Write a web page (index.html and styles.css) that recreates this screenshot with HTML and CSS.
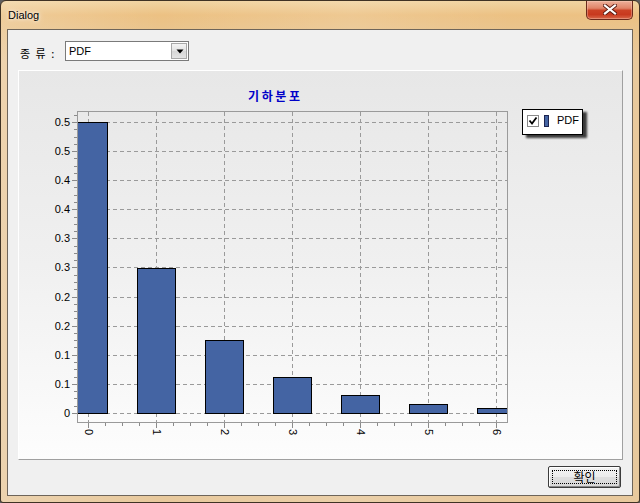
FILE: index.html
```html
<!DOCTYPE html>
<html>
<head>
<meta charset="utf-8">
<title>Dialog</title>
<link rel="stylesheet" href="styles.css">
</head>
<body>
<div class="window">
  <div class="titlebar">
    <span class="title">Dialog</span>
    <div class="close">
      <svg width="14" height="11" viewBox="0 0 14 11">
        <path d="M2 1.5L12 9.5M12 1.5L2 9.5" stroke="#5a1a10" stroke-width="4" stroke-linecap="square"/>
        <path d="M2 1.5L12 9.5M12 1.5L2 9.5" stroke="#ffffff" stroke-width="2.2" stroke-linecap="square"/>
      </svg>
    </div>
  </div>
  <div class="client">
    <div class="toprow">
      <span class="label">종 류 :</span>
      <div class="combo">
        <span class="combo-text">PDF</span>
        <span class="combo-btn">
          <svg width="8" height="5" viewBox="0 0 8 5"><path d="M0.5 0.5H7.5L4 4.5Z" fill="#000"/></svg>
        </span>
      </div>
    </div>
    <div class="panel">
      <svg class="chart" width="603" height="388" viewBox="19 71 603 388">
        <defs>
          <clipPath id="plotclip"><rect x="78" y="112" width="429" height="311"/></clipPath>
          <filter id="shadow" x="-20%" y="-30%" width="150%" height="180%">
            <feDropShadow dx="4" dy="3" stdDeviation="1.3" flood-color="#000" flood-opacity="0.75"/>
          </filter>
        </defs>

        <text class="ctitle" x="248" y="101">기하분포</text>

        <!-- grid -->
        <path class="grid" d="M78 122.5H507M78 151.5H507M78 180.5H507M78 209.5H507M78 238.5H507M78 267.5H507M78 297.5H507M78 326.5H507M78 355.5H507M78 384.5H507M78 413.5H507
                              M88.5 112V422M156.5 112V422M224.5 112V422M292.5 112V422M360.5 112V422M428.5 112V422M496.5 112V422"/>

        <!-- bars -->
        <g class="bars" clip-path="url(#plotclip)">
          <rect x="69.5" y="122.5" width="38" height="291"/>
          <rect x="137.5" y="268.5" width="38" height="145"/>
          <rect x="205.5" y="340.5" width="38" height="73"/>
          <rect x="273.5" y="377.5" width="38" height="36"/>
          <rect x="341.5" y="395.5" width="38" height="18"/>
          <rect x="409.5" y="404.5" width="38" height="9"/>
          <rect x="477.5" y="408.5" width="38" height="5"/>
        </g>

        <!-- plot frame -->
        <rect class="frame" x="77.5" y="111.5" width="430" height="311"/>

        <!-- y ticks -->
        <path class="tick" d="M72 413.5H77M72 384.5H77M72 355.5H77M72 326.5H77M72 297.5H77M72 267.5H77M72 238.5H77M72 209.5H77M72 180.5H77M72 151.5H77M72 122.5H77
          M74 406.5H77M74 398.5H77M74 391.5H77M74 377.5H77M74 369.5H77M74 362.5H77M74 347.5H77M74 340.5H77M74 333.5H77M74 318.5H77M74 311.5H77M74 304.5H77
          M74 289.5H77M74 282.5H77M74 275.5H77M74 260.5H77M74 253.5H77M74 246.5H77M74 231.5H77M74 224.5H77M74 217.5H77M74 202.5H77M74 195.5H77M74 187.5H77
          M74 173.5H77M74 166.5H77M74 158.5H77M74 144.5H77M74 137.5H77M74 129.5H77M74 115.5H77"/>

        <!-- x ticks -->
        <path class="tick" d="M88.5 423V428M156.5 423V428M224.5 423V428M292.5 423V428M360.5 423V428M428.5 423V428M496.5 423V428
          M105.5 423V426M122.5 423V426M139.5 423V426M173.5 423V426M190.5 423V426M207.5 423V426M241.5 423V426M258.5 423V426M275.5 423V426
          M309.5 423V426M326.5 423V426M343.5 423V426M377.5 423V426M394.5 423V426M411.5 423V426M445.5 423V426M462.5 423V426M479.5 423V426"/>

        <!-- y labels -->
        <g class="ylab">
          <text x="70" y="126">0.5</text>
          <text x="70" y="155">0.5</text>
          <text x="70" y="184">0.4</text>
          <text x="70" y="213">0.4</text>
          <text x="70" y="242">0.3</text>
          <text x="70" y="271">0.3</text>
          <text x="70" y="301">0.2</text>
          <text x="70" y="330">0.2</text>
          <text x="70" y="359">0.1</text>
          <text x="70" y="388">0.1</text>
          <text x="70" y="417">0</text>
        </g>

        <!-- x labels -->
        <g class="xlab">
          <text transform="translate(85 429) rotate(90)">0</text>
          <text transform="translate(153 429) rotate(90)">1</text>
          <text transform="translate(221 429) rotate(90)">2</text>
          <text transform="translate(289 429) rotate(90)">3</text>
          <text transform="translate(357 429) rotate(90)">4</text>
          <text transform="translate(425 429) rotate(90)">5</text>
          <text transform="translate(493 429) rotate(90)">6</text>
        </g>

        <!-- legend -->
        <g class="legend">
          <rect class="legend-box" x="522.5" y="109.5" width="60" height="25" filter="url(#shadow)"/>
          <rect class="chk" x="527.5" y="115.5" width="11" height="11"/>
          <path class="chkmark" d="M529.5 120.5L532 123.5L536.5 117.5"/>
          <rect class="swatch" x="544.5" y="115.5" width="4" height="11"/>
          <text class="legend-text" x="557" y="124">PDF</text>
        </g>
      </svg>
    </div>
    <div class="buttons">
      <button class="ok">확인</button>
    </div>
  </div>
</div>
</body>
</html>
```

FILE: styles.css
```css
* {
  box-sizing: border-box;
}

html,
body {
  margin: 0;
  padding: 0;
}

body {
  width: 640px;
  height: 503px;
  overflow: hidden;
  background: #5e5e5e;
  font-family: "Liberation Sans", Arial, sans-serif;
}

.window {
  width: 640px;
  height: 503px;
  border: 1px solid #3f3224;
  border-radius: 6px 6px 3px 3px;
  padding: 0 6px 6px 6px;
  display: flex;
  flex-direction: column;
  background:
    linear-gradient(to right, rgba(255, 255, 255, 0.18), rgba(255, 255, 255, 0) 25%, rgba(255, 255, 255, 0.12) 55%, rgba(255, 255, 255, 0) 80%),
    linear-gradient(to bottom, #f1d4a2 0, #ecc183 14px, #eac48c 28px, #e9c99c 60px, #e8c99d 100%);
}

.titlebar {
  height: 28px;
  display: flex;
  justify-content: space-between;
  align-items: flex-start;
}

.title {
  margin: 7px 0 0 1px;
  font-size: 11px;
  line-height: 14px;
  color: #000;
  text-shadow: 0 0 6px rgba(255, 255, 255, 0.9), 0 0 3px rgba(255, 255, 255, 0.8);
}

.close {
  width: 47px;
  height: 19px;
  border: 1px solid #6b2a1c;
  border-top: none;
  border-radius: 0 0 5px 5px;
  background: linear-gradient(to bottom, #eeb09a 0, #e08468 40%, #cc4226 52%, #c8391f 75%, #d8684a 100%);
  box-shadow: inset 0 0 0 1px rgba(255, 220, 200, 0.35);
  display: flex;
  align-items: center;
  justify-content: center;
}

.close svg {
  display: block;
  margin-top: -1px;
}

.client {
  height: 467px;
  border: 1px solid #6e655a;
  background: #f0f0f0;
  padding: 11px 9px 0 10px;
  display: flex;
  flex-direction: column;
}

.toprow {
  height: 20px;
  display: flex;
  align-items: center;
  padding-left: 2px;
}

.label {
  width: 45px;
  margin-top: 3px;
  font-family: "Noto Sans CJK KR", sans-serif;
  font-size: 11px;
  line-height: 14px;
  word-spacing: 3px;
  color: #000;
}

.combo {
  width: 124px;
  height: 20px;
  border: 1px solid #7a7a7a;
  background: #fff;
  display: flex;
  align-items: center;
  justify-content: space-between;
  padding: 1px;
}

.combo-text {
  padding-left: 2px;
  font-size: 11px;
  line-height: 13px;
  color: #000;
}

.combo-btn {
  width: 16px;
  height: 16px;
  border: 1px solid #a8a8a8;
  background: linear-gradient(to bottom, #f4f4f4, #e2e2e2 50%, #d6d6d6 51%, #e4e4e4);
  display: flex;
  align-items: center;
  justify-content: center;
}

.combo-btn svg {
  display: block;
  margin-left: 1px;
}

.panel {
  margin-top: 9px;
  width: 605px;
  height: 390px;
  border: 1px solid;
  border-color: #ffffff #a0a0a0 #a0a0a0 #ffffff;
  background: linear-gradient(to bottom, #e7e7e7 0, #f0f0f0 50%, #fdfdfd 100%);
}

.chart {
  display: block;
}

.ctitle {
  font-family: "Noto Sans CJK KR", sans-serif;
  font-weight: bold;
  font-size: 12px;
  letter-spacing: 2.6px;
  fill: #0000c8;
}

.grid {
  fill: none;
  stroke: #9a9a9a;
  stroke-width: 1;
  stroke-dasharray: 4 3;
}

.bars rect {
  fill: #4464a3;
  stroke: #000;
  stroke-width: 1;
}

.frame {
  fill: none;
  stroke: #9a9a9a;
  stroke-width: 1;
}

.tick {
  fill: none;
  stroke: #8a8a8a;
  stroke-width: 1;
}

.ylab text {
  font-family: "Liberation Sans", Arial, sans-serif;
  font-size: 11px;
  fill: #000;
  text-anchor: end;
}

.xlab text {
  font-family: "Liberation Sans", Arial, sans-serif;
  font-size: 11px;
  fill: #000;
}

.legend-box {
  fill: #fff;
  stroke: #000;
  stroke-width: 1;
}

.chk {
  fill: #fff;
  stroke: #8a8a8a;
  stroke-width: 1;
}

.chkmark {
  fill: none;
  stroke: #000;
  stroke-width: 1.8;
}

.swatch {
  fill: #4464a3;
  stroke: #1c2450;
  stroke-width: 1;
}

.legend-text {
  font-family: "Liberation Sans", Arial, sans-serif;
  font-size: 11px;
  fill: #000;
}

.buttons {
  margin-top: 6px;
  display: flex;
  justify-content: flex-end;
  padding-right: 2px;
}

.ok {
  position: relative;
  width: 73px;
  height: 22px;
  padding: 0;
  border: 1px solid #3c3c3c;
  border-radius: 2px;
  background: linear-gradient(to bottom, #f4f4f4, #ebebeb 50%, #dedede 51%, #d8d8d8);
  box-shadow: inset -1px -1px 0 #8a8a8a, inset 1px 1px 0 #ffffff;
  font-family: "Noto Sans CJK KR", sans-serif;
  font-size: 12px;
  line-height: 20px;
  color: #000;
}

.ok::after {
  content: "";
  position: absolute;
  left: 3px;
  top: 3px;
  right: 3px;
  bottom: 3px;
  border: 1px dotted #000;
}
```
